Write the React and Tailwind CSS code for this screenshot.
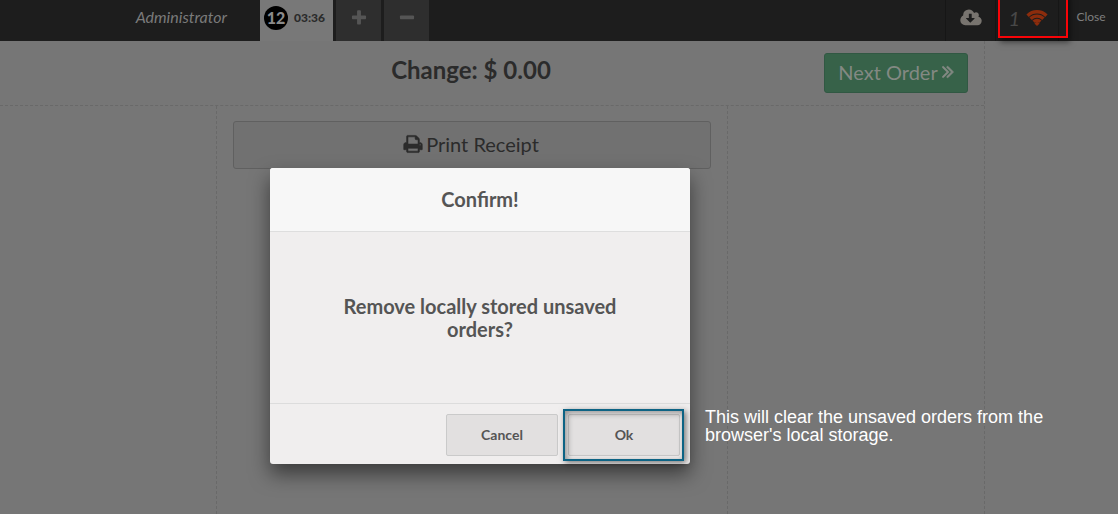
const PLUS =
  'M1600 736v192q0 40-28 68t-68 28h-416v416q0 40-28 68t-68 28h-192q-40 0-68-28t-28-68v-416h-416q-40 0-68-28t-28-68v-192q0-40 28-68t68-28h416v-416q0-40 28-68t68-28h192q40 0 68 28t28 68v416h416q40 0 68 28t28 68z';
const MINUS =
  'M1600 736v192q0 40-28 68t-68 28h-1216q-40 0-68-28t-28-68v-192q0-40 28-68t68-28h1216q40 0 68 28t28 68z';
const PRINT =
  'M448 1536h896v-256h-896v256zm0-640h896v-384h-160q-40 0-68-28t-28-68v-160h-640v640zm1152 64q0-26-19-45t-45-19-45 19-19 45 19 45 45 19 45-19 19-45zm128 0v416q0 13-9.5 22.5t-22.5 9.5h-224v160q0 40-28 68t-68 28h-960q-40 0-68-28t-28-68v-160h-224q-13 0-22.5-9.5t-9.5-22.5v-416q0-79 56.5-135.5t135.5-56.5h64v-544q0-40 28-68t68-28h672q40 0 88 20t76 48l152 152q28 28 48 76t20 88v256h64q79 0 135.5 56.5t56.5 135.5z';
const CLOUD =
  'M1216 928q0-14-9-23t-23-9h-224v-352q0-13-9.5-22.5t-22.5-9.5h-192q-13 0-22.5 9.5t-9.5 22.5v352h-224q-13 0-22.5 9.5t-9.5 22.5q0 14 9 23l352 352q9 9 23 9t23-9l351-351q10-12 10-24zm640 224q0 159-112.5 271.5t-271.5 112.5h-1088q-185 0-316.5-131.5t-131.5-316.5q0-130 70-240t188-165q-2-30-2-43 0-212 150-362t362-150q156 0 285.5 87t188.5 231q71-62 166-62 106 0 181 75t75 181q0 76-41 138 130 31 213.5 135.5t83.5 238.5z';
const CHEVRONS =
  'M979 960q0 13-10 23l-466 466q-10 10-23 10t-23-10l-50-50q-10-10-10-23t10-23l393-393-393-393q-10-10-10-23t10-23l50-50q10-10 23-10t23 10l466 466q10 10 10 23zm384 0q0 13-10 23l-466 466q-10 10-23 10t-23-10l-50-50q-10-10-10-23t10-23l393-393-393-393q-10-10-10-23t10-23l50-50q10-10 23-10t23 10l466 466q10 10 10 23z';

function Icon({ d, viewBox = '0 0 1792 1792', className, bold = false }) {
  return (
    <svg
      viewBox={viewBox}
      className={className}
      fill="currentColor"
      stroke={bold ? 'currentColor' : 'none'}
      strokeWidth="50"
      aria-hidden="true"
    >
      <path d={d} />
    </svg>
  );
}

function WifiIcon({ className }) {
  return (
    <svg viewBox="0 0 22 16" className={className} fill="none" stroke="currentColor" strokeWidth="3.4" aria-hidden="true">
      <path d="M1.6 5.7a13.3 13.3 0 0 1 18.8 0" />
      <path d="M4.6 8.8a9 9 0 0 1 12.8 0" />
      <path d="M7.7 11.8a4.7 4.7 0 0 1 6.6 0" />
      <path d="M11 11.6l2.6 1.8-2.6 2.6-2.6-2.6z" fill="currentColor" stroke="none" />
    </svg>
  );
}

function Header() {
  return (
    <header className="flex h-[41px] shrink-0 bg-[#1d1d1d] text-[#7a7a7a]">
      <div className="flex w-[260px] items-center justify-end pr-[33px] pb-[7px] text-base italic">
        Administrator
      </div>
      <nav className="flex gap-[3px]">
        <button className="flex w-[73px] items-center gap-[6px] bg-[#787878] pb-[6px] pl-1 text-xs font-black text-[#2b2b2b]">
          <span className="flex size-6 items-center justify-center rounded-full bg-black text-base text-[#8a8a8a]">
            12
          </span>
          03:36
        </button>
        <button aria-label="New order" className="flex w-[45px] items-center justify-center bg-[#2e2e2e] pb-[5px] text-[#555]">
          <Icon d={PLUS} className="size-[18px]" />
        </button>
        <button aria-label="Delete order" className="flex w-[45px] items-center justify-center bg-[#2e2e2e] pb-[5px] text-[#555]">
          <Icon d={MINUS} className="size-[18px]" />
        </button>
      </nav>
      <div className="ml-auto flex">
        <button aria-label="Download" className="flex w-[50px] items-center justify-center border-l border-[#161616] pb-[6px] text-[#78746f]">
          <Icon d={CLOUD} viewBox="-64 0 1920 1792" className="h-5 w-[22px]" />
        </button>
        <button aria-label="1 unsaved order" className="relative flex w-[64px] items-center justify-end gap-[6px] border-x border-[#161616] pr-[10px] pb-[6px] text-xl text-[#484848] italic">
          1
          <WifiIcon className="h-4 w-[22px] text-[#8c2c0c]" />
          <span className="absolute -top-2 -right-[10px] bottom-[3px] left-[2px] border-2 border-[#f80408] shadow-[2px_4px_6px_rgba(0,0,0,0.5)]" />
        </button>
        <button className="w-[59px] pr-[2px] pl-[7px] pb-[7px] text-xs text-[#7f7f7f]">Close</button>
      </div>
    </header>
  );
}

function Receipt() {
  return (
    <main className="flex flex-1 pr-[133px]">
      <section className="flex flex-1 flex-col border-r border-dashed border-[#696969]">
        <div className="flex h-[65px] items-center border-b border-dashed border-[#696969]">
          <h1 className="flex-1 pb-[7px] pl-[118px] text-center text-2xl font-bold">Change: $ 0.00</h1>
          <button className="mr-4 flex h-10 w-36 items-center justify-center gap-1 rounded-[3px] border border-[#315843] bg-[#376249] pb-[2px] text-xl text-[#838983]">
            Next Order
            <Icon d={CHEVRONS} viewBox="384 400 1024 1120" className="h-[14px] w-3" bold />
          </button>
        </div>
        <div className="flex flex-1">
          <div className="w-[216px]" />
          <div className="flex-1 border-x border-dashed border-[#696969] px-4 pt-[15px]">
            <button className="flex h-12 w-full items-center justify-center gap-[3px] rounded-[3px] border border-[#606060] bg-[#717171] pr-[2px] pb-[2px] text-xl">
              <Icon d={PRINT} className="size-5" bold />
              Print Receipt
            </button>
          </div>
          <div className="w-64" />
        </div>
      </section>
    </main>
  );
}

function ConfirmDialog() {
  return (
    <div
      role="dialog"
      aria-labelledby="confirm-title"
      className="w-[420px] rounded-[3px] bg-[#f0eeee] text-center text-[#555] shadow-[0_10px_20px_rgba(0,0,0,0.5)]"
    >
      <h2 id="confirm-title" className="rounded-t-[3px] border-b border-[#dedede] bg-[#f7f7f7] py-[18px] text-xl leading-[27px] font-bold">
        Confirm!
      </h2>
      <p className="flex h-[171px] items-center justify-center px-16 text-xl leading-[23px] font-bold">
        Remove locally stored unsaved orders?
      </p>
      <div className="flex justify-end gap-[10px] border-t border-[#dcdcdc] px-[10px] pt-[10px] pb-2 text-sm">
        <button className="h-[42px] w-28 rounded-[2px] border border-[#cacaca] bg-[#e2e0e0] font-bold">Cancel</button>
        <button className="relative h-[42px] w-28 rounded-[2px] border border-[#cacaca] bg-[#e2e0e0] font-bold">
          Ok
          <span className="absolute -inset-y-[6px] -right-[5px] -left-[6px] border-2 border-[#0d6384] shadow-[2px_2px_6px_rgba(0,0,0,0.5),inset_2px_2px_6px_rgba(0,0,0,0.4)]" />
        </button>
      </div>
    </div>
  );
}

export default function App() {
  return (
    <div className="relative flex min-h-screen flex-col bg-[#767676] font-['Lato',sans-serif] text-[#2b2b2b]">
      <Header />
      <Receipt />
      <div className="absolute inset-x-0 top-[168px] flex items-end gap-[15px] pl-[270px]">
        <ConfirmDialog />
        <p className="max-w-[360px] pb-5 font-['Liberation_Sans',sans-serif] text-lg leading-[18px] text-white">
          This will clear the unsaved orders from the browser's local storage.
        </p>
      </div>
    </div>
  );
}
